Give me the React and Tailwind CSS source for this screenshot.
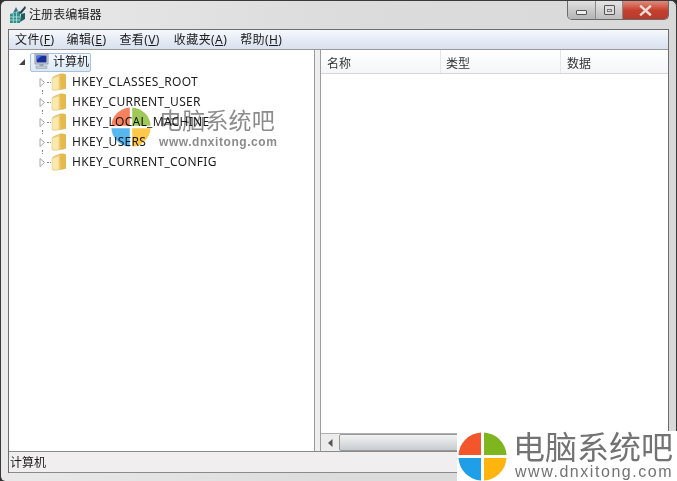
const cjk = { fontFamily: '"Noto Sans", "Noto Sans CJK SC", sans-serif' };

function Logo({ size, className }) {
  return (
    <svg width={size} height={size} viewBox="0 0 50 50" className={className}>
      <path d="M23.5 0.5 A24.5 24.5 0 0 0 0.5 23.5 H23.5 Z" fill="#f2562a" />
      <path d="M26.5 0.5 A24.5 24.5 0 0 1 49.5 23.5 H26.5 Z" fill="#7fb51f" />
      <path d="M0.5 26.5 A24.5 24.5 0 0 0 23.5 49.5 V26.5 Z" fill="#1f9fe8" />
      <path d="M49.5 26.5 A24.5 24.5 0 0 1 26.5 49.5 V26.5 Z" fill="#ffb50d" />
    </svg>
  );
}

function Folder() {
  return (
    <svg width="16" height="18" viewBox="0 0 16 18">
      <defs>
        <linearGradient id="fg" x1="0" y1="0" x2="1" y2="0">
          <stop offset="0" stopColor="#f9e08a" />
          <stop offset="0.6" stopColor="#f5cf62" />
          <stop offset="1" stopColor="#dcaa3c" />
        </linearGradient>
      </defs>
      <path d="M2 4 L9 1 H13 V16 L2 17 Z" fill="url(#fg)" stroke="#c9a65a" strokeWidth="0.6" />
      <path d="M9 1 H14 Q15 1 15 2 V15 Q15 16 14 16 H10 Z" fill="#e6b94e" />
      <path d="M1 5 L8 3 V17 H2 Q1 17 1 16 Z" fill="#f9e9ae" stroke="#dcc074" strokeWidth="0.5" />
    </svg>
  );
}

function Computer() {
  return (
    <svg width="18" height="18" viewBox="0 0 18 18">
      <rect x="3" y="1" width="13" height="10" fill="#d8dde6" stroke="#7c8594" strokeWidth="0.8" />
      <rect x="4.5" y="2.5" width="10" height="7" fill="#1b2f9c" />
      <path d="M4.5 2.5 H10 L4.5 7 Z" fill="#4d78e6" />
      <rect x="7.5" y="11" width="4" height="2" fill="#9aa3b0" />
      <rect x="4" y="13" width="11" height="2.5" fill="#c9ced6" stroke="#8a929e" strokeWidth="0.5" />
    </svg>
  );
}

function RegIcon() {
  return (
    <svg width="20" height="20" viewBox="0 0 20 20">
      <path d="M3 9 L13 6 V18 L3 18 Z" fill="#2f8f8a" />
      <path d="M3 12 H13 M3 15 H13 M6.3 8 V18 M9.6 7 V18" stroke="#bfe6e0" strokeWidth="0.8" />
      <path d="M6 8 L9 2 L11 6 Z" fill="#3a6f97" />
      <path d="M12 8 L18 1 L19 3 L14 9 Z" fill="#27424f" />
      <path d="M14 9 L18 8 V14 L13 17 Z" fill="#1f5d60" />
    </svg>
  );
}

function Arrow() {
  return (
    <svg width="7" height="9" viewBox="0 0 7 9">
      <path d="M1 0.5 L5.5 4.5 L1 8.5 Z" fill="#fff" stroke="#a6a6a6" />
    </svg>
  );
}

const keys = ["HKEY_CLASSES_ROOT", "HKEY_CURRENT_USER", "HKEY_LOCAL_MACHINE", "HKEY_USERS", "HKEY_CURRENT_CONFIG"];
const menus = [
  ["文件", "F", "mr-0"],
  ["编辑", "E", "mr-[1px]"],
  ["查看", "V", "mr-[2px]"],
  ["收藏夹", "A", "mr-[1px]"],
  ["帮助", "H", "mr-[1px]"],
];

export default function App() {
  return (
    <div className="relative w-[677px] h-[481px] overflow-hidden bg-[#2e2e2e] text-[12px] text-[#1c1c1c]" style={cjk}>
      <div className="w-full h-full rounded-t-[6px] rounded-b-[5px] border-t border-x border-[#3a3a3a] bg-gradient-to-r from-[#e9e9e9] via-[#dcdcdc] to-[#d9d9d9] flex flex-col">
        {/* title bar */}
        <div className="h-[28px] shrink-0 flex items-start justify-between pl-[6px] pr-[7px]">
          <div className="flex items-center gap-[2px] h-[27px]">
            <RegIcon />
            <span className="text-[12px] tracking-[0.1px]">注册表编辑器</span>
          </div>
          <div className="flex h-[19px] w-[102px] rounded-b-[5px] border border-t-0 border-[#6a6a6a] overflow-hidden">
            <div className="w-[28px] flex items-center justify-center bg-gradient-to-b from-[#e0e0e0] to-[#b4b4b4] border-r border-[#8a8a8a]">
              <div className="w-[11px] h-[5px] mt-[4px] bg-[#eee] border border-[#555] rounded-[1px]" />
            </div>
            <div className="w-[27px] flex items-center justify-center bg-gradient-to-b from-[#e4e4e4] to-[#bdbdbd] border-r border-[#8a8a8a]">
              <div className="w-[11px] h-[10px] border border-[#555] rounded-[1px] bg-[#ddd] flex items-center justify-center">
                <div className="w-[5px] h-[3px] border border-[#777]" />
              </div>
            </div>
            <div className="flex-1 flex items-center justify-center bg-gradient-to-b from-[#dd8a7d] via-[#c8402f] to-[#b53a2c]">
              <svg width="13" height="11" viewBox="0 0 13 11">
                <path d="M2 1.5 L11 9.5 M11 1.5 L2 9.5" stroke="#e8dcd8" strokeWidth="2.4" strokeLinecap="square" />
              </svg>
            </div>
          </div>
        </div>

        {/* client */}
        <div className="ml-[7px] mr-[7px] flex-1 flex flex-col border border-[#6d6d6d] border-b-0 min-h-0 bg-[#f0f0f0]">
          <div className="h-[20px] shrink-0 flex items-center gap-[12px] pl-[6px] tracking-[0.4px] bg-gradient-to-b from-[#f6f8fc] via-[#e6ecf6] to-[#d9e1ee] border-b border-[#9a9a9a]">
            {menus.map(([n, k, m]) => (
              <span key={k} className={m}>
                {n}(<span className="underline">{k}</span>)
              </span>
            ))}
          </div>

          <div className="flex-1 min-h-0 flex">
            {/* tree */}
            <div className="w-[306px] shrink-0 bg-white border-r border-[#9c9c9c] pl-[9px] pt-[1px]">
              <div className="h-[20px] mt-[1px] flex items-center">
                <svg width="8" height="8" viewBox="0 0 8 8" className="mr-[4px]">
                  <path d="M7 1 V7 H1 Z" fill="#444" />
                </svg>
                <div className="h-[19px] flex items-center gap-[3px] pl-[1px] pr-[1px] border border-[#a9c2dc] rounded-[2px] bg-gradient-to-b from-[#f2f7fd] to-[#dde9f6]">
                  <Computer />
                  <span className="text-[12px]">计算机</span>
                </div>
              </div>
              {keys.map((k, i) => (
                <div key={k} className="relative h-[20px] flex items-center pl-[21px]">
                  <Arrow />
                  <div className="w-[4px] ml-[1px] border-t border-dotted border-[#888]" />
                  <Folder />
                  <span className="ml-[5px] text-[12px] leading-none tracking-[0.3px]">{k}</span>
                  {i < keys.length - 1 && (
                    <div className="absolute left-[24px] bottom-[-2px] h-[4px] border-l border-dotted border-[#888]" />
                  )}
                </div>
              ))}
            </div>

            {/* splitter */}
            <div className="w-[5px] shrink-0 bg-[#eeeeee]" />

            {/* list */}
            <div className="flex-1 min-w-0 bg-white border-l border-[#9c9c9c] flex flex-col">
              <div className="h-[24px] shrink-0 flex items-center bg-gradient-to-b from-white to-[#f4f6f9] border-b border-[#d5d5d5] text-[#333]">
                <div className="w-[120px] pl-[6px] pt-[4px] border-r border-[#e3e5e8] h-full flex items-center">名称</div>
                <div className="w-[120px] pl-[5px] pt-[4px] border-r border-[#e3e5e8] h-full flex items-center">类型</div>
                <div className="pl-[6px] pt-[4px]">数据</div>
              </div>
              <div className="flex-1" />
              <div className="h-[18px] shrink-0 flex bg-[#ececec] border-t border-[#b0b0b0]">
                <div className="w-[18px] flex items-center justify-center">
                  <svg width="5" height="8" viewBox="0 0 5 8"><path d="M4.5 0 V8 L0 4 Z" fill="#555" /></svg>
                </div>
                <div className="w-[300px] flex items-center justify-center pl-[85px] bg-gradient-to-b from-[#f2f2f2] to-[#c9cdd2] border border-[#999] rounded-[2px]">
                  <div className="w-[7px] h-[7px] border-x border-[#666] flex justify-center"><div className="w-[1px] h-full bg-[#666]" /></div>
                </div>
              </div>
            </div>
          </div>

          {/* status */}
          <div className="h-[22px] shrink-0 flex items-center pl-[1px] pt-[2px] bg-[#f0eeee] border-t border-[#8a8a8a] border-b text-[12px]">
            计算机
          </div>
        </div>
        <div className="h-[8px] shrink-0" />
      </div>

      {/* small faded watermark */}
      <div className="absolute left-[111px] top-[107px] opacity-75 mix-blend-multiply pointer-events-none">
        <Logo size={40} />
      </div>
      <div className="absolute left-[159px] top-[105px] pointer-events-none text-[#8c8c8c] mix-blend-multiply">
        <div className="text-[23px] leading-[30px] tracking-[0.2px] whitespace-nowrap">电脑系统吧</div>
        <div className="text-[12px] leading-[14px] font-bold tracking-[0.55px] whitespace-nowrap" style={{ fontFamily: '"Liberation Sans", sans-serif' }}>www.dnxitong.com</div>
      </div>

      {/* large watermark */}
      <div className="absolute right-0 bottom-0 w-[220px] h-[50px] bg-white flex items-center pl-[1px]">
        <Logo size={49} />
        <div className="ml-[6px] -mt-[3px] text-[#737373]">
          <div className="text-[32px] leading-[34px] whitespace-nowrap">电脑系统吧</div>
          <div className="ml-[2px] text-[16px] leading-[15px] tracking-[1.55px] whitespace-nowrap" style={{ fontFamily: '"Liberation Sans", sans-serif' }}>www.dnxitong.com</div>
        </div>
      </div>
    </div>
  );
}
